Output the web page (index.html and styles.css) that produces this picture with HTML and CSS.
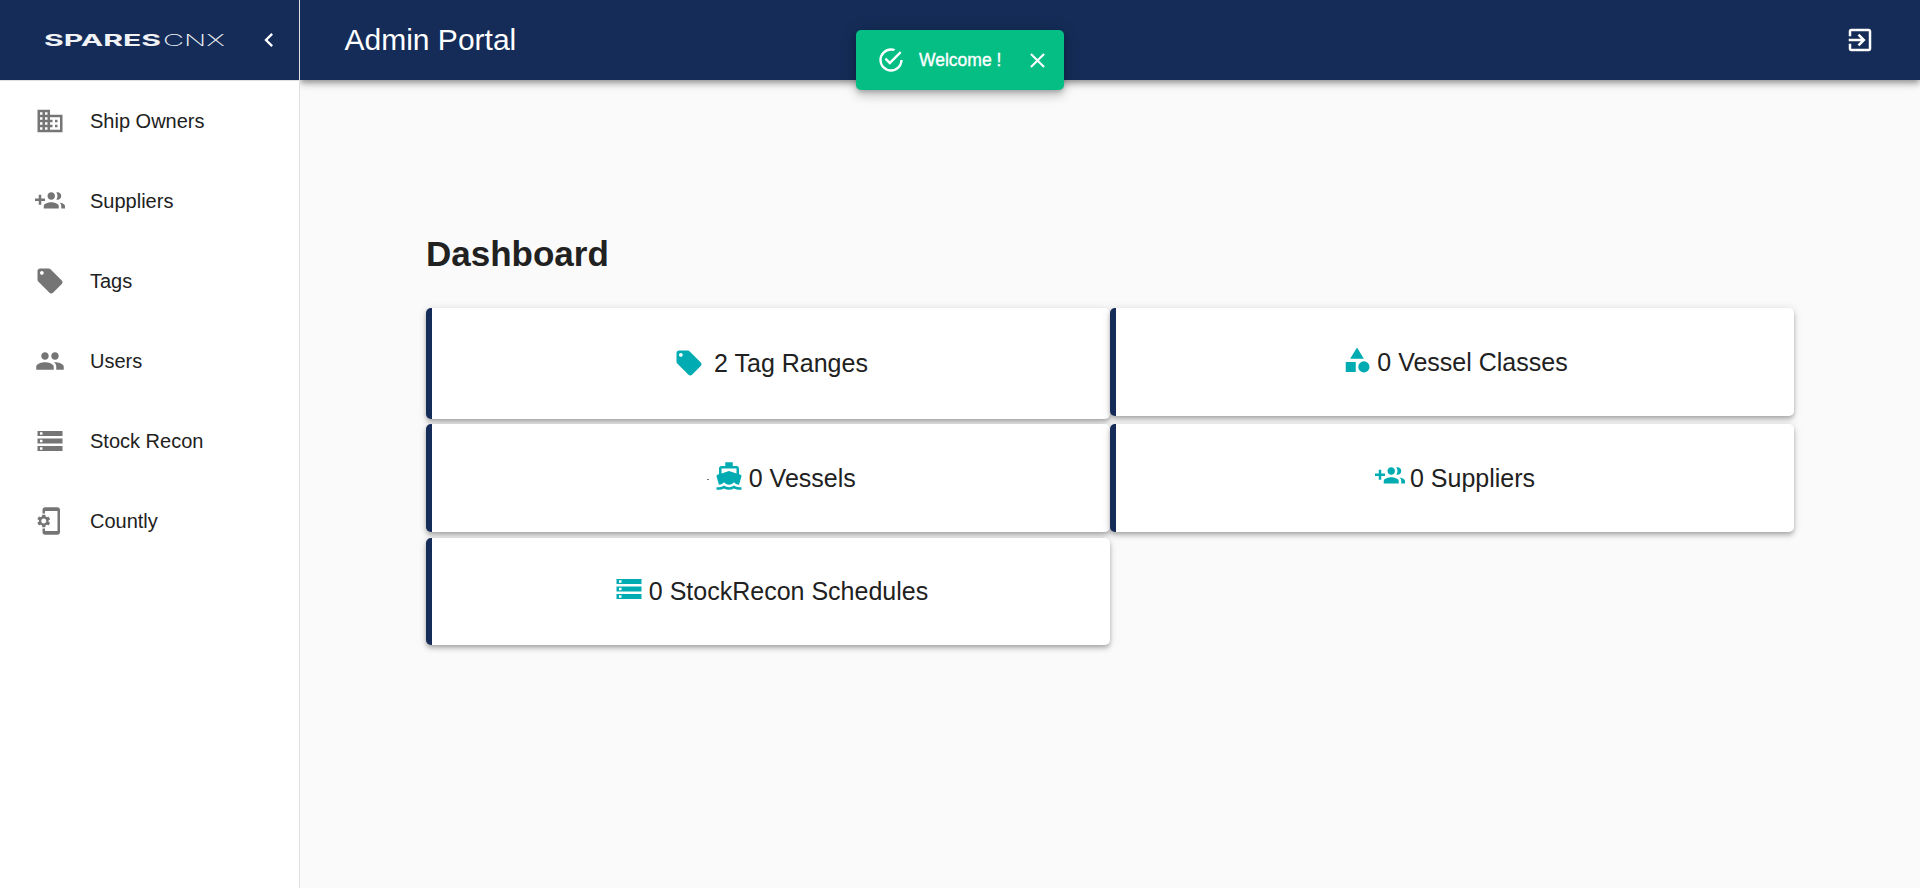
FILE: index.html
```html
<!DOCTYPE html>
<html lang="en">
<head>
<meta charset="utf-8">
<title>Admin Portal</title>
<link rel="stylesheet" href="styles.css">
</head>
<body>
<svg class="sprite" aria-hidden="true">
  <symbol id="tag" viewBox="0 0 24 24"><path d="M21.41 11.58l-9-9C12.05 2.22 11.55 2 11 2H4c-1.1 0-2 .9-2 2v7c0 .55.22 1.05.59 1.42l9 9c.36.36.86.58 1.41.58s1.05-.22 1.41-.59l7-7c.37-.36.59-.86.59-1.41s-.23-1.06-.59-1.42zM5.5 7C4.67 7 4 6.33 4 5.5S4.67 4 5.5 4 7 4.67 7 5.5 6.33 7 5.5 7z"/></symbol>
  <symbol id="group-add" viewBox="0 0 24 24"><path d="M8 10H5V7H3v3H0v2h3v3h2v-3h3v-2zm10 1c1.66 0 2.99-1.34 2.99-3S19.66 5 18 5c-.32 0-.63.05-.91.14.57.81.9 1.79.9 2.86s-.34 2.04-.9 2.86c.28.09.59.14.91.14zm-5 0c1.66 0 2.99-1.34 2.99-3S14.66 5 13 5c-1.66 0-3 1.34-3 3s1.34 3 3 3zm6.62 2.16c.83.73 1.38 1.66 1.38 2.84v2h3v-2c0-1.54-2.37-2.49-4.38-2.84zM13 13c-2 0-6 1-6 3v2h12v-2c0-2-4-3-6-3z"/></symbol>
  <symbol id="storage" viewBox="0 0 24 24"><path d="M2 20h20v-4H2v4zm2-3h2v2H4v-2zM2 4v4h20V4H2zm4 3H4V5h2v2zm-4 7h20v-4H2v4zm2-3h2v2H4v-2z"/></symbol>
</svg>
<div class="app">
  <aside class="sidebar">
    <div class="brand">
      <svg class="logo" viewBox="0 0 180 14" role="img" aria-label="SparesCNX">
        <text class="logo-bold" x="-1" y="13" textLength="117" lengthAdjust="spacingAndGlyphs">SPARES</text>
        <text class="logo-thin" x="118" y="13" textLength="62" lengthAdjust="spacingAndGlyphs">CNX</text>
      </svg>
      <svg class="chevron" viewBox="0 0 24 24"><path d="M15.41 7.41L14 6l-6 6 6 6 1.41-1.41L10.83 12z"/></svg>
    </div>
    <nav class="nav">
      <a class="nav-item"><svg class="icon" viewBox="0 0 24 24"><path d="M12 7V3H2v18h20V7H12zM6 19H4v-2h2v2zm0-4H4v-2h2v2zm0-4H4V9h2v2zm0-4H4V5h2v2zm4 12H8v-2h2v2zm0-4H8v-2h2v2zm0-4H8V9h2v2zm0-4H8V5h2v2zm10 12h-8v-2h2v-2h-2v-2h2v-2h-2V9h8v10zm-2-8h-2v2h2v-2zm0 4h-2v2h2v-2z"/></svg>Ship Owners</a>
      <a class="nav-item"><svg class="icon"><use href="#group-add"/></svg>Suppliers</a>
      <a class="nav-item"><svg class="icon"><use href="#tag"/></svg>Tags</a>
      <a class="nav-item"><svg class="icon" viewBox="0 0 24 24"><path d="M16 11c1.66 0 2.99-1.34 2.99-3S17.66 5 16 5c-1.66 0-3 1.34-3 3s1.34 3 3 3zm-8 0c1.66 0 2.99-1.34 2.99-3S9.66 5 8 5C6.34 5 5 6.34 5 8s1.34 3 3 3zm0 2c-2.33 0-7 1.17-7 3.5V19h14v-2.5c0-2.33-4.67-3.5-7-3.5zm8 0c-.29 0-.62.02-.97.05 1.16.84 1.97 1.97 1.97 3.45V19h6v-2.5c0-2.33-4.67-3.5-7-3.5z"/></svg>Users</a>
      <a class="nav-item"><svg class="icon"><use href="#storage"/></svg>Stock Recon</a>
      <a class="nav-item"><svg class="icon" viewBox="1 0 24 24"><path d="M11.8 12.5v-1l1.1-.8c.1-.1.1-.2.1-.3l-1-1.7c-.1-.1-.2-.2-.3-.1l-1.3.4c-.3-.2-.6-.4-.9-.5l-.2-1.3c0-.1-.1-.2-.3-.2H7c-.1 0-.2.1-.3.2l-.2 1.3c-.3.1-.6.3-.9.5l-1.3-.5c-.1 0-.2 0-.3.1l-1 1.7c-.1.1 0 .2.1.3l1.1.8v1l-1.1.8c-.1.2-.1.3-.1.4l1 1.7c.1.1.2.2.3.1l1.4-.4c.3.2.6.4.9.5l.2 1.3c-.1.1.1.2.2.2h2c.1 0 .2-.1.3-.2l.2-1.3c.3-.1.6-.3.9-.5l1.3.5c.1 0 .2 0 .3-.1l1-1.7c.1-.1 0-.2-.1-.3l-1.1-.9zM8 14c-1.1 0-2-.9-2-2s.9-2 2-2 2 .9 2 2-.9 2-2 2zM19 1H9c-1.1 0-2 .9-2 2v3h2V4h10v16H9v-2H7v3c0 1.1.9 2 2 2h10c1.1 0 2-.9 2-2V3c0-1.1-.9-2-2-2z"/></svg>Countly</a>
    </nav>
  </aside>
  <div class="main">
    <header class="topbar">
      <h1 class="topbar-title">Admin Portal</h1>
      <svg class="icon icon-exit" viewBox="0 0 24 24"><path d="M10.09 15.59L11.5 17l5-5-5-5-1.41 1.41L12.67 11H3v2h9.67l-2.58 2.59zM19 3H5c-1.11 0-2 .9-2 2v4h2V5h14v14H5v-4H3v4c0 1.1.89 2 2 2h14c1.1 0 2-.9 2-2V5c0-1.1-.9-2-2-2z"/></svg>
    </header>
    <main class="content">
      <h2 class="page-title">Dashboard</h2>
      <section class="cards">
        <div class="card card-tags"><svg class="icon"><use href="#tag"/></svg>2 Tag Ranges</div>
        <div class="card"><svg class="icon" viewBox="0 0 24 24"><path d="M12 2l-5.5 9h11zM3 13.5h8v8H3z"/><circle cx="17.5" cy="17.5" r="4.5"/></svg>0 Vessel Classes</div>
        <div class="card"><span class="mark"></span><svg class="icon" viewBox="0 0 24 24"><path d="M20 21c-1.39 0-2.78-.47-4-1.32-2.44 1.71-5.56 1.71-8 0C6.78 20.53 5.39 21 4 21H2v2h2c1.38 0 2.74-.35 4-.99 2.52 1.29 5.48 1.29 8 0 1.26.65 2.62.99 4 .99h2v-2h-2zM3.95 19H4c1.6 0 3.02-.88 4-2 .98 1.12 2.4 2 4 2s3.02-.88 4-2c.98 1.12 2.4 2 4 2h.05l1.89-6.68c.08-.26.06-.54-.06-.78s-.34-.42-.6-.5L20 10.62V6c0-1.1-.9-2-2-2h-3V1H9v3H6c-1.1 0-2 .9-2 2v4.62l-1.29.42c-.26.08-.48.26-.6.5s-.15.52-.06.78L3.95 19zM6 6h12v3.97L12 8 6 9.97V6z"/></svg>0 Vessels</div>
        <div class="card"><svg class="icon"><use href="#group-add"/></svg>0 Suppliers</div>
        <div class="card card-stock"><svg class="icon"><use href="#storage"/></svg>0 StockRecon Schedules</div>
      </section>
    </main>
  </div>
</div>
<div class="toast" role="alert">
  <svg class="toast-check" viewBox="0 0 24 24"><path d="M20,12A8,8 0 0,1 12,20A8,8 0 0,1 4,12A8,8 0 0,1 12,4C12.76,4 13.5,4.11 14.2,4.31L15.77,2.74C14.61,2.26 13.34,2 12,2A10,10 0 0,0 2,12A10,10 0 0,0 12,22A10,10 0 0,0 22,12M7.91,10.08L6.5,11.5L11,16L21,6L19.59,4.58L11,13.17L7.91,10.08Z"/></svg>
  <span class="toast-text">Welcome !</span>
  <svg class="toast-close" viewBox="0 0 24 24"><path d="M19 6.41L17.59 5 12 10.59 6.41 5 5 6.41 10.59 12 5 17.59 6.41 19 12 13.41 17.59 19 19 17.59 13.41 12z"/></svg>
</div>
</body>
</html>
```

FILE: styles.css
```css
* { box-sizing: border-box; }

body {
  margin: 0;
  background: #fafafa;
  color: #212121;
  font-family: "Liberation Sans", Arial, sans-serif;
}

svg { fill: currentColor; flex: none; }
.sprite { display: none; }
.icon { width: 30px; height: 30px; }

.app { display: flex; height: 100vh; overflow: hidden; }

.sidebar {
  position: relative;
  z-index: 2;
  flex: 0 0 300px;
  background: #fff;
  border-right: 1px solid #e0e0e0;
}
.brand {
  display: flex;
  align-items: center;
  justify-content: space-between;
  height: 81px;
  padding: 0 16px 1px 45px;
  background: #142c57;
  border-bottom: 1px solid #e0e0e0;
  color: #fff;
}
.logo { width: 180px; height: 14px; overflow: visible; fill: #f0f2f6; }
.logo-bold { font: 700 16.5px Inter, sans-serif; }
.logo-thin { font: 200 16.5px Inter, sans-serif; }
.chevron { width: 28px; height: 28px; }

.nav-item {
  display: flex;
  align-items: center;
  gap: 25px;
  height: 80px;
  padding-left: 35px;
  font-size: 20px;
}
.nav-item .icon { color: #757575; }

.main { flex: 1; display: flex; flex-direction: column; }
.topbar {
  display: flex;
  align-items: center;
  justify-content: space-between;
  height: 80px;
  padding: 0 45px 0 44.5px;
  background: #142c57;
  color: #fff;
  box-shadow: 0 2.5px 5px -1px rgba(0,0,0,.25), 0 5px 6px 0 rgba(0,0,0,.16), 0 1px 12px 0 rgba(0,0,0,.13);
}
.topbar-title { margin: 0; font-size: 30px; font-weight: 400; }

.content { padding: 154px 126px 0; }
.page-title { margin: 0 0 34px; font-size: 35px; line-height: 40px; }
.cards {
  display: grid;
  grid-template-columns: 684px 684px;
  grid-template-rows: 116px 114px 107px;
  align-items: start;
}
.card {
  display: flex;
  align-items: center;
  justify-content: center;
  gap: 5px;
  height: 108px;
  background: #fff;
  border-left: 6px solid #142c57;
  border-radius: 5px;
  font-size: 25px;
  box-shadow: 0 2px 4px -1px rgba(0,0,0,.2), 0 4px 5px 0 rgba(0,0,0,.14), 0 1px 10px 0 rgba(0,0,0,.12);
}
.card .icon { margin-bottom: 4px; color: #00acb1; }
.card-tags { height: 111px; gap: 10px; }
.card-tags .icon { margin-bottom: 2px; }
.card-stock { height: 107px; }
.card-stock .icon { margin-bottom: 5px; }
.mark {
  width: 2px;
  height: 1px;
  margin: 3px 0 0 20.5px;
  background: #777;
}

.toast {
  position: absolute;
  z-index: 5;
  top: 30px;
  left: 856px;
  display: flex;
  align-items: center;
  width: 207.5px;
  height: 60px;
  padding-left: 20.5px;
  border-radius: 5px;
  background: #05be84;
  color: #fff;
  font-size: 17.5px;
  box-shadow: 0 3px 5px -1px rgba(0,0,0,.2), 0 6px 10px 0 rgba(0,0,0,.14), 0 1px 18px 0 rgba(0,0,0,.12);
}
.toast-check { width: 28px; height: 28px; }
.toast-text { margin: 0 24px 0 14.5px; -webkit-text-stroke: .35px #fff; white-space: nowrap; }
.toast-close { width: 25px; height: 25px; }
```
